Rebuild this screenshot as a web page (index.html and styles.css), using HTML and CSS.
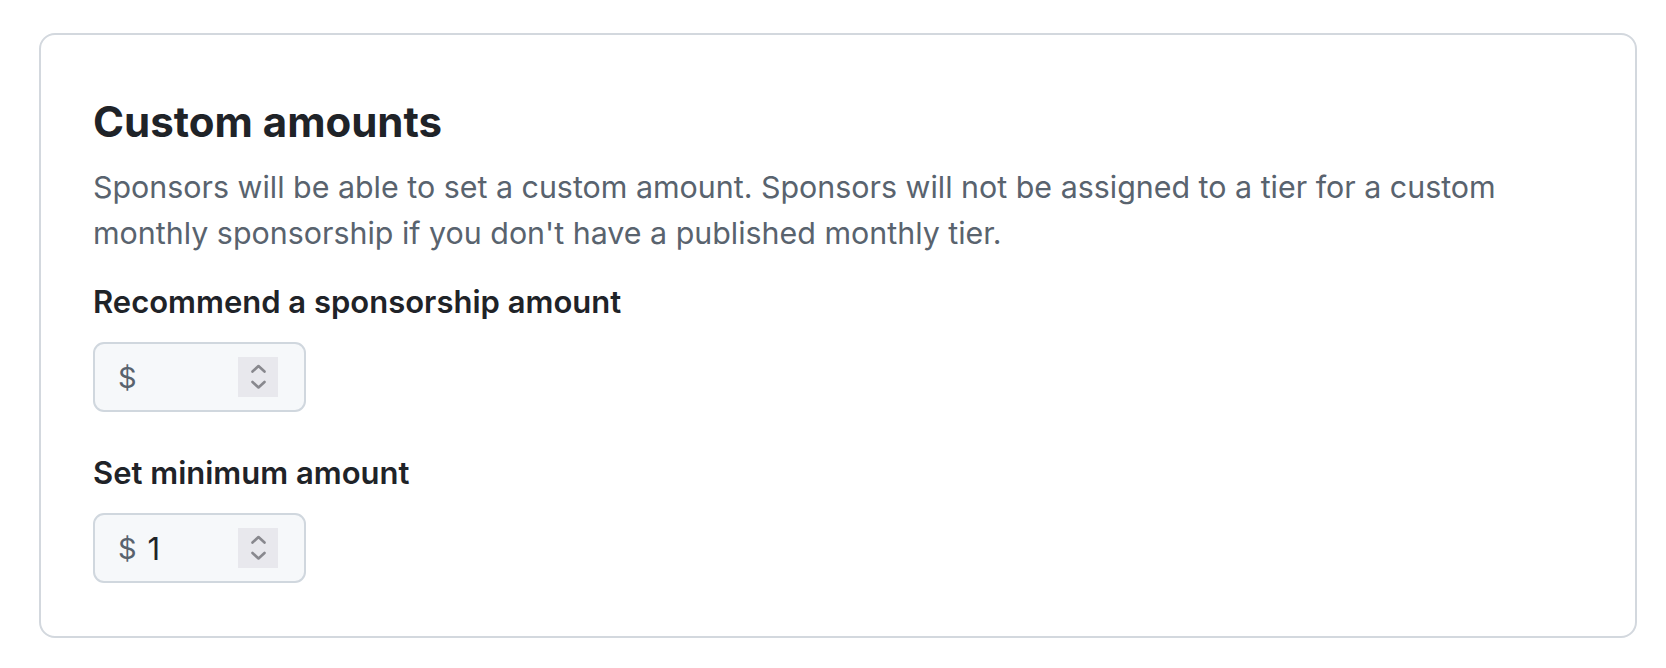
FILE: index.html
```html
<!DOCTYPE html>
<html lang="en">
<head>
<meta charset="utf-8">
<title>Custom amounts</title>
<link rel="stylesheet" href="styles.css">
</head>
<body>
<section class="box">
  <h2 class="title">Custom amounts</h2>
  <p class="desc">Sponsors will be able to set a custom amount. Sponsors will not be assigned to a tier for a custom monthly sponsorship if you don't have a published monthly tier.</p>
  <div class="group">
    <label class="label">Recommend a sponsorship amount</label>
    <div class="field">
      <span class="currency">$</span>
      <span class="value"></span>
      <span class="spinner">
        <svg width="40" height="40" viewBox="0 0 40 40" aria-hidden="true"><path d="M14.5 14.5 L20.5 9 L26.5 14.5" fill="none" stroke="#88888e" stroke-width="2.6" stroke-linecap="round" stroke-linejoin="round"/><path d="M14.5 25 L20.5 30.5 L26.5 25" fill="none" stroke="#88888e" stroke-width="2.6" stroke-linecap="round" stroke-linejoin="round"/></svg>
      </span>
    </div>
  </div>
  <div class="group second">
    <label class="label">Set minimum amount</label>
    <div class="field">
      <span class="currency">$</span>
      <span class="value">1</span>
      <span class="spinner">
        <svg width="40" height="40" viewBox="0 0 40 40" aria-hidden="true"><path d="M14.5 14.5 L20.5 9 L26.5 14.5" fill="none" stroke="#88888e" stroke-width="2.6" stroke-linecap="round" stroke-linejoin="round"/><path d="M14.5 25 L20.5 30.5 L26.5 25" fill="none" stroke="#88888e" stroke-width="2.6" stroke-linecap="round" stroke-linejoin="round"/></svg>
      </span>
    </div>
  </div>
</section>
</body>
</html>
```

FILE: styles.css
```css
html, body {
  margin: 0;
  padding: 0;
  background: #ffffff;
}
body {
  padding: 33px 29px 0 39px;
  font-family: Inter, "Noto Sans", "Liberation Sans", sans-serif;
  color: #1f2328;
}
.box {
  box-sizing: border-box;
  width: 1598px;
  height: 605px;
  border: 2px solid #d3d8de;
  border-radius: 16px;
  padding: 61px 52px 0 52px;
}
.title {
  margin: 0;
  font-size: 42px;
  line-height: 52px;
  font-weight: 700;
  letter-spacing: 0;
  color: #1f2328;
}
.desc {
  margin: 16px 0 0 0;
  font-size: 30.4px;
  line-height: 46px;
  color: #59636e;
}
.group {
  margin-top: 26px;
}
.group.second {
  margin-top: 41px;
}
.label {
  display: block;
  font-size: 31px;
  line-height: 40px;
  font-weight: 600;
  color: #1f2328;
}
.field {
  box-sizing: border-box;
  margin-top: 20px;
  width: 213px;
  height: 70px;
  border: 2px solid #d0d7de;
  border-radius: 11px;
  background: #f6f8fa;
  display: flex;
  align-items: center;
  padding: 0 26px 0 23px;
  font-size: 29px;
}
.currency {
  color: #59636e;
}
.value {
  flex: 1;
  margin-left: 11px;
  font-size: 31px;
  color: #1f2328;
}
.spinner {
  width: 40px;
  height: 40px;
  background: #e8e8ed;
  display: block;
}
.spinner svg {
  display: block;
}
```
